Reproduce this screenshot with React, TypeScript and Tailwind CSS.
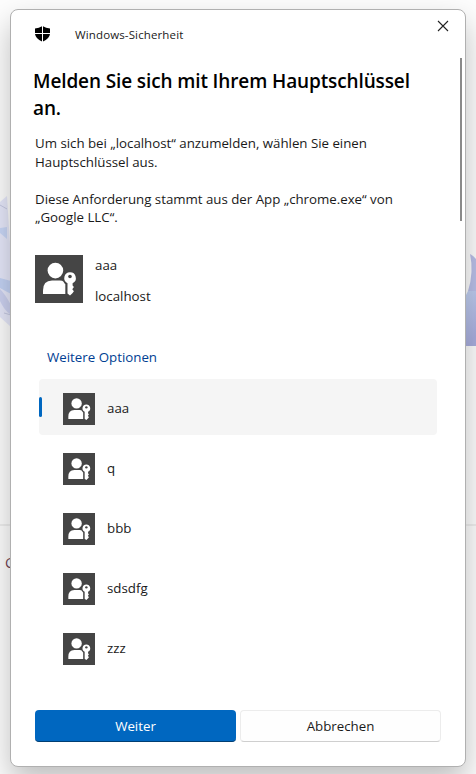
import React from 'react';

const accounts = ['aaa', 'q', 'bbb', 'sdsdfg', 'zzz'];

function PasskeyIcon({ className }: { className: string }) {
  return (
    <svg viewBox="0 0 48 48" className={className} aria-hidden="true">
      <rect width="48" height="48" fill="#454545" />
      <circle cx="20.4" cy="15.6" r="7.8" fill="#fff" />
      <path d="M8 39V35.5Q8 25.5 17 25.5H25Q27.3 25.5 28.3 26.6L30.3 29.5V39Z" fill="#fff" />
      <path
        fillRule="evenodd"
        stroke="#454545"
        strokeWidth="2.4"
        paintOrder="stroke"
        d="M35 17.2a5.8 5.8 0 0 1 2.6 11V30.5l1.3 1.6-1.6 2.1 1.6 2.1-1.5 2L35 40.6 32.5 38.6V28.2A5.8 5.8 0 0 1 35 17.2Z"
        fill="#fff"
      />
      <circle cx="35" cy="21.5" r="1.8" fill="#454545" />
    </svg>
  );
}

function Backdrop() {
  return (
    <svg viewBox="0 0 476 774" className="absolute inset-0 h-full w-full" aria-hidden="true">
      <defs>
        <linearGradient id="block" x1="0" y1="0" x2="0.3" y2="1">
          <stop offset="0" stopColor="#c3d3f3" />
          <stop offset="1" stopColor="#a9aede" />
        </linearGradient>
      </defs>
      <path d="M0 202L7 196L11 260V327L0 317Z" fill="#e6e8fa" />
      <path d="M0 228L7 227V239L0 233Z" fill="#c9d7f7" />
      <path d="M0 278L11 281V294L0 288Z" fill="#c4d3f5" />
      <path d="M0 289Q5 294 11 305V315Q4 310 0 301Z" fill="#cdd2f1" />
      <path d="M0 205L7 209M4 313L11 315" stroke="#c5c9e2" strokeWidth="1" fill="none" />
      <path d="M470 254Q474 256 476 259V291H468Q474 272 470 254Z" fill="#b9bfe8" />
      <path d="M465 297L468 291H476V346H465Z" fill="url(#block)" />
      <path d="M0 525H476" stroke="#eeeeee" strokeWidth="2" />
    </svg>
  );
}

export default function App() {
  return (
    <div className="relative h-[774px] w-[476px] overflow-hidden bg-[#fdfdfd] px-[10px] pt-[9px] font-['Open_Sans','Noto_Sans',sans-serif] text-[13.3px] text-[#1a1a1a]">
      <Backdrop />
      <span className="absolute top-[553px] left-[5px] text-[14px] leading-[20px] text-[#6f4050]">G</span>
      <main className="relative flex h-[758px] w-[456px] flex-col rounded-[8px] border border-[#b0b0b0] bg-white shadow-[0_14px_30px_rgba(0,0,0,0.25)]">
        <header className="flex h-[48px] shrink-0 items-center pl-[24px]">
          <svg viewBox="0 0 15 16" className="h-[16px] w-[15px]" fill="#000" aria-hidden="true">
            <path d="M7 0.2V7H0V2.4Q4.2 2.3 7 0.2ZM8 0.2Q10.8 2.3 15 2.4V7H8ZM0 8H7V15.6Q0.7 12.7 0 8ZM15 8H8V15.6Q14.3 12.7 15 8Z" />
          </svg>
          <h1 className="ml-[25px] pt-[2px] text-[11.5px] tracking-[0.13px] whitespace-nowrap">Windows-Sicherheit</h1>
          <button className="mr-[16px] mb-[16px] ml-auto" aria-label="Schließen">
            <svg viewBox="0 0 12 12" className="h-[12px] w-[12px]" stroke="#222" strokeWidth="1.1" fill="none">
              <path d="M1 1L11 11M11 1L1 11" />
            </svg>
          </button>
        </header>
        <div className="flex min-h-0 flex-1">
          <section className="w-[450px] shrink-0 pt-[10px] pl-[23px]">
            <h2 className="ml-[-1px] text-[19px] leading-[27px] font-semibold tracking-[-0.12px] whitespace-nowrap text-black">
              Melden Sie sich mit Ihrem Hauptschlüssel
              <br />
              an.
            </h2>
            <p className="mt-[12px] ml-px leading-[18.6px] tracking-[-0.02px] whitespace-nowrap">
              Um sich bei „localhost“ anzumelden, wählen Sie einen
              <br />
              Hauptschlüssel aus.
              <br />
              <br />
              Diese Anforderung stammt aus der App „chrome.exe“ von
              <br />
              „Google LLC“.
            </p>
            <div className="mt-[28px] ml-px flex h-[56px] gap-[12px]">
              <PasskeyIcon className="h-[48px] w-[48px]" />
              <div className="flex flex-col gap-[11px] leading-[20px]">
                <span>aaa</span>
                <span>localhost</span>
              </div>
            </div>
            <h3 className="mt-[36px] ml-[13px] leading-[20px] text-[#003e92]">Weitere Optionen</h3>
            <ul className="mt-[12px] ml-[5px] flex w-[398px] flex-col gap-[4px]">
              {accounts.map((name, i) => (
                <li
                  key={name}
                  className={`flex h-[56px] items-center rounded-[4px] ${i === 0 ? 'bg-[#f5f5f5]' : ''}`}
                >
                  <span className={`h-[20px] w-[3px] rounded-[2px] ${i === 0 ? 'bg-[#0067c0]' : ''}`} />
                  <PasskeyIcon className="mt-[4px] ml-[21px] h-[32px] w-[32px]" />
                  <span className="ml-[12px] pt-[2px] leading-[20px]">{name}</span>
                </li>
              ))}
            </ul>
          </section>
          <div className="ml-[-1px] h-[163px] w-[2px] shrink-0 bg-[#8a8a8a]" />
        </div>
        <footer className="flex h-[56px] shrink-0 gap-[4px] pl-[24px]">
          <button className="h-[32px] w-[201px] rounded-[4px] border-b border-[#003e73] bg-[#0067c0] pt-[2px] text-white">
            Weiter
          </button>
          <button className="h-[32px] w-[201px] rounded-[4px] border border-[#ececec] border-b-[#cfcfcf] bg-[#fefefe] pt-[2px]">
            Abbrechen
          </button>
        </footer>
      </main>
    </div>
  );
}
